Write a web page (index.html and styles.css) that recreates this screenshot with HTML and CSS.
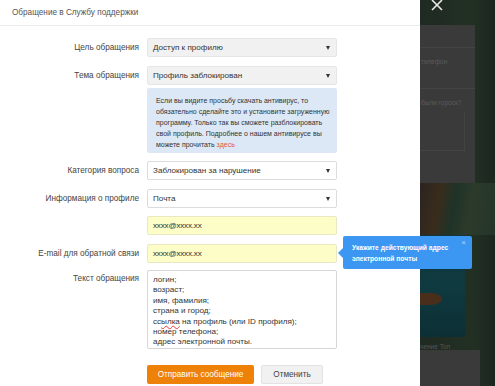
FILE: index.html
```html
<!DOCTYPE html>
<html lang="ru">
<head>
    <meta charset="UTF-8">
    <meta name="viewport" content="width=device-width, initial-scale=1.0">
    <title>Обращение в Службу поддержки</title>
    <link rel="stylesheet" href="styles.css">
</head>
<body>
    <div class="modal">
        <div class="modal-header">Обращение в Службу поддержки</div>

        <div class="form">
            <div class="row">
                <label class="row-label">Цель обращения</label>
                <div class="select select-gray">Доступ к профилю</div>
            </div>

            <div class="row row-tight">
                <label class="row-label">Тема обращения</label>
                <div class="select select-gray">Профиль заблокирован</div>
            </div>

            <div class="row row-info">
                <div class="row-label"></div>
                <div class="info">
                    Если вы видите просьбу скачать антивирус, то<br>
                    обязательно сделайте это и установите загруженную<br>
                    программу. Только так вы сможете разблокировать<br>
                    свой профиль. Подробнее о нашем антивирусе вы<br>
                    можете прочитать <a href="#" class="info-link">здесь</a>
                </div>
            </div>

            <div class="row">
                <label class="row-label">Категория вопроса</label>
                <div class="select">Заблокирован за нарушение</div>
            </div>

            <div class="row row-m8">
                <label class="row-label">Информация о профиле</label>
                <div class="select">Почта</div>
            </div>

            <div class="row">
                <div class="row-label"></div>
                <div class="input input-yellow">xxxx@xxxx.xx</div>
            </div>

            <div class="row row-m7 row-email">
                <label class="row-label">E-mail для обратной связи</label>
                <div class="input input-yellow">xxxx@xxxx.xx</div>
                <div class="tooltip">
                    <span class="tooltip-close">×</span>
                    Укажите действующий адрес<br>электронной почты
                </div>
            </div>

            <div class="row row-top">
                <label class="row-label">Текст обращения</label>
                <div class="textarea">
                    логин;<br>
                    возраст;<br>
                    имя, фамилия;<br>
                    страна и город;<br>
                    сс<span class="spell">ылка</span> на профиль (или ID профиля);<br>
                    номер телефона;<br>
                    адрес электронной почты.
                </div>
            </div>

            <div class="row row-buttons">
                <div class="row-label"></div>
                <button class="btn btn-primary">Отправить сообщение</button>
                <button class="btn btn-cancel">Отменить</button>
            </div>
        </div>
    </div>

    <div class="backdrop">
        <div class="backdrop-close">
            <svg width="12" height="12" viewBox="0 0 12 12"><path d="M1 1 L11 11 M11 1 L1 11" stroke="#e8e8e8" stroke-width="1.6"/></svg>
        </div>
        <div class="bg-panel">
            <div class="bg-line bg-line-1"></div>
            <div class="bg-text bg-text-1">телефон</div>
            <div class="bg-line bg-line-2"></div>
            <div class="bg-text bg-text-2">были гороск?</div>
            <div class="bg-box"></div>
        </div>
        <div class="bg-rays"></div>
        <div class="bg-photo">
            <div class="bg-fish"></div>
        </div>
        <div class="bg-caption">чение Топ</div>
        <div class="bg-bottom"></div>
    </div>
</body>
</html>
```

FILE: styles.css
```css
* {
    box-sizing: border-box;
    margin: 0;
    padding: 0;
    font-family: 'Liberation Sans', Arial, sans-serif;
}

body {
    width: 495px;
    height: 386px;
    overflow: hidden;
    display: flex;
    background-color: #1f2b23;
}

.modal {
    width: 420px;
    height: 386px;
    background-color: white;
    flex-shrink: 0;
    position: relative;
    z-index: 2;
}

.modal-header {
    height: 26px;
    padding: 8px 0 0 12px;
    border-bottom: 1px solid #ebebeb;
    color: #555;
    font-size: 8.2px;
}

.form {
    padding-top: 12px;
}

.row {
    display: flex;
    align-items: center;
    margin-bottom: 9px;
    position: relative;
}

.row-tight {
    margin-bottom: 3px;
}

.row-info {
    margin-bottom: 8px;
}

.row-m8 {
    margin-bottom: 8px;
}

.row-m7 {
    margin-bottom: 7px;
}

.row-top {
    align-items: flex-start;
    margin-bottom: 16px;
}

.row-label {
    width: 147px;
    padding-right: 8px;
    text-align: right;
    color: #444;
    font-size: 8.2px;
    flex-shrink: 0;
}

.row-top .row-label {
    padding-top: 4px;
}

.select,
.input {
    width: 190px;
    height: 19px;
    padding: 0 5px;
    border: 1px solid #dcdcdc;
    border-radius: 2px;
    color: #333;
    font-size: 8.1px;
    line-height: 17px;
    background-color: white;
    position: relative;
}

.select-gray {
    background-color: #f1f1f1;
    border-color: #e6e6e6;
}

.select::after {
    content: "";
    position: absolute;
    right: 6px;
    top: 7px;
    border-left: 2.5px solid transparent;
    border-right: 2.5px solid transparent;
    border-top: 4px solid #333;
}

.input-yellow {
    background-color: #fdfdc8;
    border-color: #e8e8c4;
    letter-spacing: -0.2px;
}

.info {
    width: 190px;
    height: 65px;
    padding: 7px 0 0 9px;
    background-color: #dce8f5;
    border-radius: 2px;
    color: #333;
    font-size: 7px;
    line-height: 11px;
    white-space: nowrap;
}

.info-link {
    color: #e2583a;
    text-decoration: none;
}

.tooltip {
    position: absolute;
    left: 343px;
    top: -8px;
    width: 129px;
    height: 33px;
    padding: 6px 0 0 9px;
    background-color: #3c97f2;
    border-radius: 2px;
    color: white;
    font-size: 6.7px;
    font-weight: bold;
    line-height: 11px;
    white-space: nowrap;
}

.tooltip::before {
    content: "";
    position: absolute;
    left: -5px;
    top: 12px;
    border-top: 5px solid transparent;
    border-bottom: 5px solid transparent;
    border-right: 5px solid #3c97f2;
}

.tooltip-close {
    position: absolute;
    right: 6px;
    top: 1px;
    font-size: 8px;
    font-weight: normal;
    color: #b9d8fa;
}

.textarea {
    width: 190px;
    height: 79px;
    padding: 4px 5px;
    border: 1px solid #d6d6d6;
    border-radius: 2px;
    color: #333;
    font-size: 8.1px;
    line-height: 10.4px;
}

.spell {
    text-decoration: underline wavy #e03b3b;
    text-decoration-thickness: 0.4px;
    text-underline-offset: 1px;
}

.btn {
    height: 19px;
    border-radius: 2px;
    font-size: 8.2px;
    cursor: pointer;
}

.btn-primary {
    width: 107px;
    background-color: #ee8208;
    border: none;
    color: white;
}

.btn-cancel {
    width: 62px;
    margin-left: 7px;
    background-color: #f1f1f1;
    border: 1px solid #e2e2e2;
    color: #444;
}

/* page behind the dark overlay */
.backdrop {
    flex: 1;
    position: relative;
    z-index: 1;
    background: linear-gradient(90deg, #1f2a22 0%, #223024 70%, #1c271f 100%);
}

.backdrop-close {
    position: absolute;
    left: 11px;
    top: -3px;
}

.bg-panel {
    position: absolute;
    left: 0;
    top: 25px;
    width: 55px;
    height: 158px;
    background-color: #3a3a3a;
}

.bg-line {
    position: absolute;
    left: 0;
    right: 0;
    height: 1px;
    background-color: #444;
}

.bg-line-1 {
    top: 22px;
}

.bg-line-2 {
    top: 63px;
}

.bg-text {
    position: absolute;
    left: 1px;
    font-size: 6.5px;
    color: #5a5a5a;
}

.bg-text-1 {
    top: 33px;
}

.bg-text-2 {
    top: 74px;
}

.bg-box {
    position: absolute;
    left: 0;
    top: 86px;
    width: 45px;
    height: 40px;
    border-bottom: 1px solid #444;
    border-right: 1px solid #444;
}

.bg-rays {
    position: absolute;
    left: 0;
    top: 183px;
    width: 75px;
    height: 52px;
    background: linear-gradient(100deg, #2a2420 0%, #3a2c1c 25%, #1f3328 45%, #2c3a2a 65%, #24352a 100%);
}

.bg-photo {
    position: absolute;
    left: 0;
    top: 235px;
    width: 45px;
    height: 102px;
    background: linear-gradient(180deg, #12363b 0%, #0f3a40 50%, #0c2f34 100%);
}

.bg-fish {
    position: absolute;
    left: 0;
    top: 58px;
    width: 22px;
    height: 12px;
    border-radius: 0 50% 50% 0;
    background-color: #4a2e1c;
}

.bg-caption {
    position: absolute;
    left: 0;
    top: 343px;
    font-size: 6.5px;
    color: #555;
}

.bg-bottom {
    position: absolute;
    left: 0;
    top: 350px;
    width: 60px;
    height: 36px;
    background-color: #3a3a3a;
}
```
